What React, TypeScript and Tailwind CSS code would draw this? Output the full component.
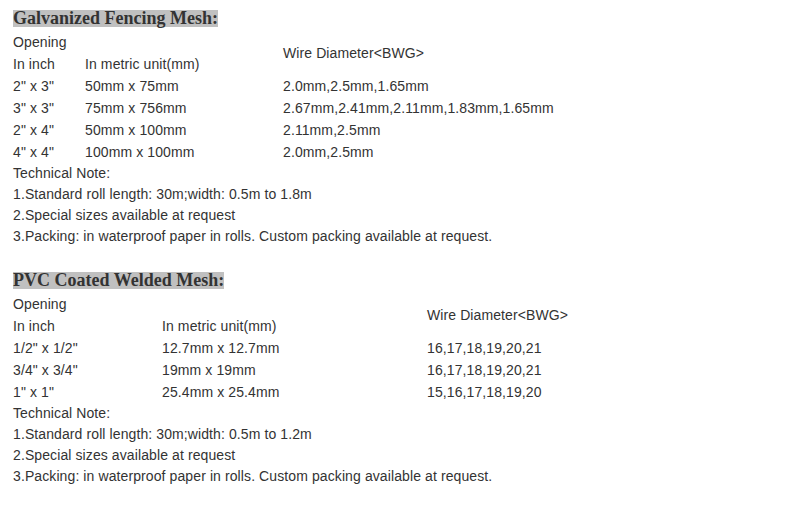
const fencing = {
  title: 'Galvanized Fencing Mesh:',
  cols: 'grid-cols-[72px_198px_1fr]',
  rows: [
    ['2" x 3"', '50mm x 75mm', '2.0mm,2.5mm,1.65mm'],
    ['3" x 3"', '75mm x 756mm', '2.67mm,2.41mm,2.11mm,1.83mm,1.65mm'],
    ['2" x 4"', '50mm x 100mm', '2.11mm,2.5mm'],
    ['4" x 4"', '100mm x 100mm', '2.0mm,2.5mm'],
  ],
  notes: [
    '1.Standard roll length: 30m;width: 0.5m to 1.8m',
    '2.Special sizes available at request',
    '3.Packing: in waterproof paper in rolls. Custom packing available at request.',
  ],
};

const pvc = {
  title: 'PVC Coated Welded Mesh:',
  cols: 'grid-cols-[149px_265px_1fr]',
  rows: [
    ['1/2" x 1/2"', '12.7mm x 12.7mm', '16,17,18,19,20,21'],
    ['3/4" x 3/4"', '19mm x 19mm', '16,17,18,19,20,21'],
    ['1" x 1"', '25.4mm x 25.4mm', '15,16,17,18,19,20'],
  ],
  notes: [
    '1.Standard roll length: 30m;width: 0.5m to 1.2m',
    '2.Special sizes available at request',
    '3.Packing: in waterproof paper in rolls. Custom packing available at request.',
  ],
};

type Spec = typeof fencing;

function MeshSection({ spec }: { spec: Spec }) {
  return (
    <section>
      <h2 className="h-[26px] text-[18px] font-bold font-['Liberation_Serif',serif]">
        <span className="inline-block h-[17px] leading-[17px] bg-[#c0c0c0] mt-[4px]">{spec.title}</span>
      </h2>
      <div className={`grid ${spec.cols} auto-rows-[22px] items-center tracking-[0.1px]`}>
        <div>Opening</div>
        <div />
        <div className="row-span-2 self-center">Wire Diameter&lt;BWG&gt;</div>
        <div>In inch</div>
        <div>In metric unit(mm)</div>
        {spec.rows.map((row, i) => (
          <div key={i} className="contents">
            <div>{row[0]}</div>
            <div>{row[1]}</div>
            <div>{row[2]}</div>
          </div>
        ))}
      </div>
      <div className="leading-[21px] tracking-[0.1px]">
        <p>Technical Note:</p>
        {spec.notes.map((note, i) => (
          <p key={i}>{note}</p>
        ))}
      </div>
    </section>
  );
}

export default function App() {
  return (
    <div className="w-[805px] h-[505px] bg-white text-[#333333] text-[14px] font-['Liberation_Sans',Arial,sans-serif] pl-[13px] pt-[5px]">
      <MeshSection spec={fencing} />
      <div className="h-[20px]" />
      <MeshSection spec={pvc} />
    </div>
  );
}
